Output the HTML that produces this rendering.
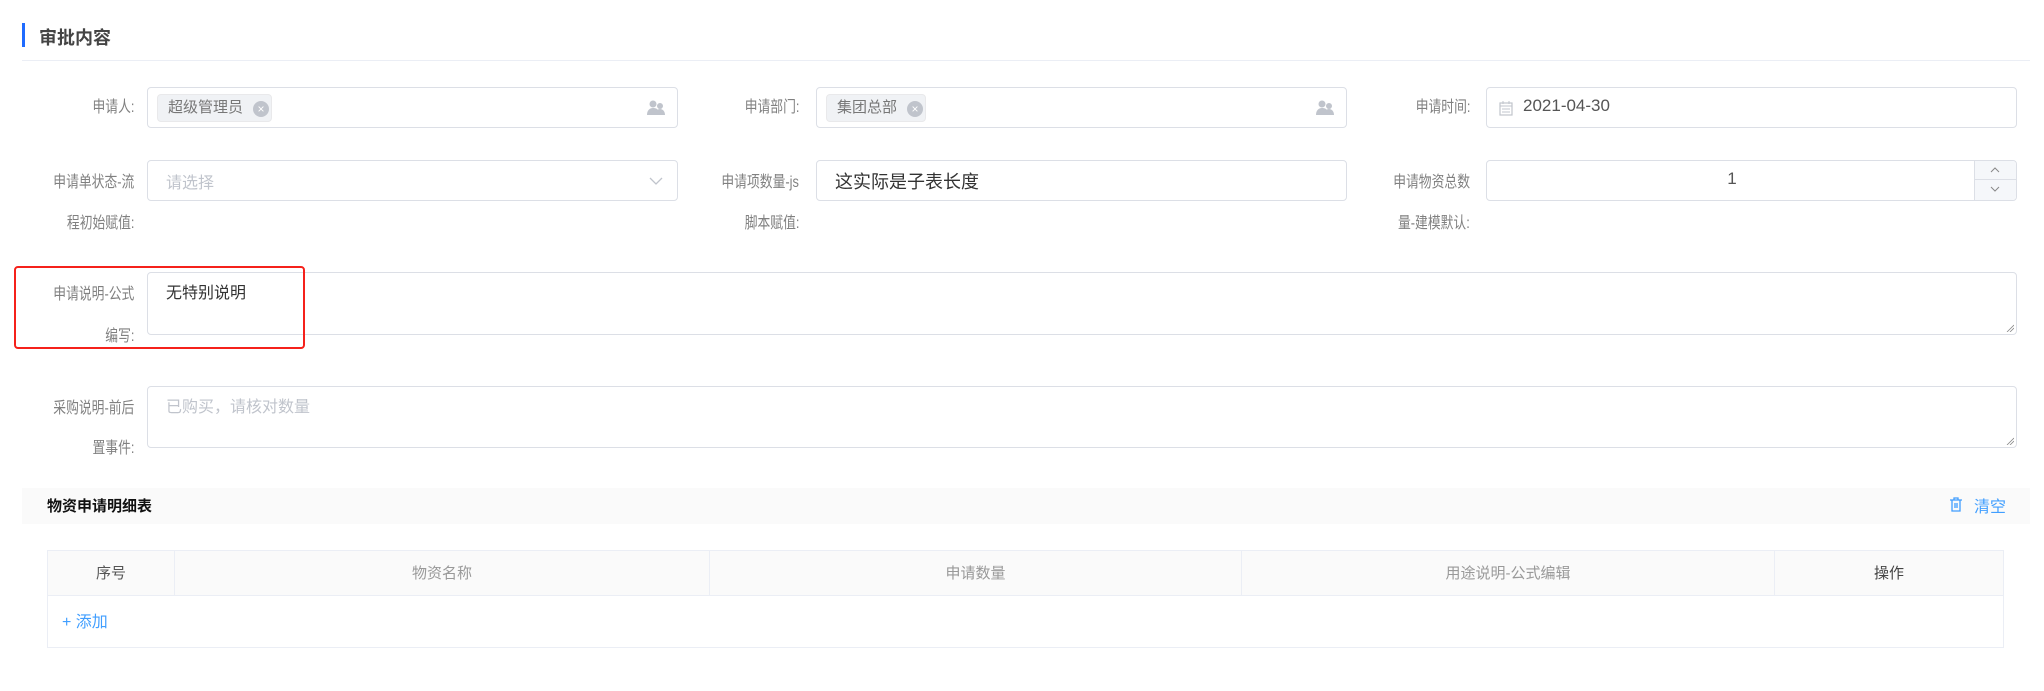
<!DOCTYPE html>
<html><head><meta charset="utf-8">
<style>
*{box-sizing:border-box;margin:0;padding:0}
body{width:2044px;height:691px;background:#fff;position:relative;overflow:hidden;font-family:"Liberation Sans","Noto Sans CJK SC",sans-serif;color:#606266}
.a{position:absolute}
.lbl{position:absolute;font-size:16px;color:#808080;text-align:right;white-space:nowrap;transform:scaleX(0.8);transform-origin:right center}
.inp{position:absolute;border:1px solid #dcdfe6;border-radius:4px;background:#fff}
.tag{position:absolute;top:6px;left:9px;height:28px;background:#f0f2f5;border:1px solid #e9e9eb;border-radius:4px;font-size:15px;color:#777;line-height:26px;padding-left:10px}
.tag i{position:absolute;top:6px;width:16px;height:16px;border-radius:50%;background:#c0c4cc;color:#fff;font-style:normal;font-size:12px;line-height:16px;text-align:center}
</style></head><body>
<div class="a" style="left:22px;top:23px;width:3px;height:24px;background:#1f6bff"></div>
<div class="a" style="left:39px;top:24px;font-size:18px;font-weight:bold;color:#444">审批内容</div>
<div class="a" style="left:22px;top:60px;width:2008px;height:1px;background:#ebeef5"></div>

<div class="lbl" style="right:1910px;top:93px">申请人:</div>
<div class="inp" style="left:147px;top:87px;width:531px;height:41px">
 <div class="tag" style="width:115px">超级管理员<i style="left:95px">×</i></div>
 <svg class="a" style="right:12px;top:12px" width="18" height="16" viewBox="0 0 18 16"><circle cx="6" cy="4" r="3.5" fill="#c0c4cc"/><path d="M0 15c0-5 3-7 6-7s5 1 5 3v4z" fill="#c0c4cc"/><circle cx="13" cy="6" r="3" fill="#c0c4cc"/><path d="M8 15c0-4 2.5-6 5-6s5 2 5 6z" fill="#c0c4cc"/></svg>
</div>
<div class="lbl" style="right:1245px;top:93px">申请部门:</div>
<div class="inp" style="left:816px;top:87px;width:531px;height:41px">
 <div class="tag" style="width:100px">集团总部<i style="left:80px">×</i></div>
 <svg class="a" style="right:12px;top:12px" width="18" height="16" viewBox="0 0 18 16"><circle cx="6" cy="4" r="3.5" fill="#c0c4cc"/><path d="M0 15c0-5 3-7 6-7s5 1 5 3v4z" fill="#c0c4cc"/><circle cx="13" cy="6" r="3" fill="#c0c4cc"/><path d="M8 15c0-4 2.5-6 5-6s5 2 5 6z" fill="#c0c4cc"/></svg>
</div>
<div class="lbl" style="right:574px;top:93px">申请时间:</div>
<div class="inp" style="left:1486px;top:87px;width:531px;height:41px">
 <svg class="a" style="left:12px;top:13px" width="14" height="15" viewBox="0 0 14 15"><rect x="1" y="2" width="12" height="12" fill="none" stroke="#c0c4cc" stroke-width="1.2"/><path d="M1 5h12M4 0v3M10 0v3M3 8h8M3 11h8" stroke="#c0c4cc" stroke-width="1"/></svg>
 <div class="a" style="left:36px;top:8px;font-size:17px;color:#555">2021-04-30</div>
</div>

<div class="lbl" style="right:1910px;top:168px">申请单状态-流</div>
<div class="lbl" style="right:1910px;top:209px">程初始赋值:</div>
<div class="inp" style="left:147px;top:160px;width:531px;height:41px">
 <div class="a" style="left:18px;top:8px;font-size:16px;color:#c0c4cc">请选择</div>
 <svg class="a" style="right:14px;top:15px" width="14" height="10" viewBox="0 0 14 10"><path d="M1 2l6 6 6-6" fill="none" stroke="#c0c4cc" stroke-width="1.3"/></svg>
</div>
<div class="lbl" style="right:1245px;top:168px">申请项数量-js</div>
<div class="lbl" style="right:1245px;top:209px">脚本赋值:</div>
<div class="inp" style="left:816px;top:160px;width:531px;height:41px">
 <div class="a" style="left:18px;top:7px;font-size:18px;color:#333">这实际是子表长度</div>
</div>
<div class="lbl" style="right:574px;top:168px">申请物资总数</div>
<div class="lbl" style="right:574px;top:209px">量-建模默认:</div>
<div class="inp" style="left:1486px;top:160px;width:531px;height:41px">
 <div class="a" style="left:0;width:490px;top:8px;text-align:center;font-size:17px;color:#555">1</div>
 <div class="a" style="right:0;top:0;width:42px;height:39px;background:#f5f7fa;border-left:1px solid #dcdfe6;border-radius:0 4px 4px 0">
  <div style="height:19px;border-bottom:1px solid #dcdfe6"></div>
  <svg class="a" style="left:15px;top:5px" width="10" height="7" viewBox="0 0 10 7"><path d="M1 6l4-4 4 4" fill="none" stroke="#888" stroke-width="1"/></svg>
  <svg class="a" style="left:15px;top:25px" width="10" height="7" viewBox="0 0 10 7"><path d="M1 1l4 4 4-4" fill="none" stroke="#888" stroke-width="1"/></svg>
 </div>
</div>

<div class="lbl" style="right:1910px;top:280px">申请说明-公式</div>
<div class="lbl" style="right:1910px;top:322px">编写:</div>
<div class="inp" style="left:147px;top:272px;width:1870px;height:63px">
 <div class="a" style="left:18px;top:6px;font-size:16px;color:#333">无特别说明</div>
 <svg class="a" style="right:2px;bottom:2px" width="8" height="8" viewBox="0 0 8 8"><path d="M1 8L8 1M4 8L8 4" stroke="#888" stroke-width="0.8"/></svg>
</div>
<div class="a" style="left:14px;top:266px;width:291px;height:83px;border:2.5px solid #f5211b;border-radius:4px"></div>

<div class="lbl" style="right:1910px;top:394px">采购说明-前后</div>
<div class="lbl" style="right:1910px;top:434px">置事件:</div>
<div class="inp" style="left:147px;top:386px;width:1870px;height:62px">
 <div class="a" style="left:18px;top:6px;font-size:16px;color:#c0c4cc">已购买，请核对数量</div>
 <svg class="a" style="right:2px;bottom:2px" width="8" height="8" viewBox="0 0 8 8"><path d="M1 8L8 1M4 8L8 4" stroke="#888" stroke-width="0.8"/></svg>
</div>

<div class="a" style="left:22px;top:488px;width:2008px;height:36px;background:#fafafa"></div>
<div class="a" style="left:47px;top:495px;font-size:15px;font-weight:bold;color:#111">物资申请明细表</div>
<svg class="a" style="left:1949px;top:497px" width="14" height="15" viewBox="0 0 14 15"><path d="M1 3h12M5 3V1h4v2M3 3v11h8V3M6 6v5M8 6v5" fill="none" stroke="#409eff" stroke-width="1.3"/></svg>
<div class="a" style="left:1974px;top:493px;font-size:16px;color:#409eff">清空</div>

<div class="a" style="left:47px;top:550px;width:1957px;height:98px;border:1px solid #ebeef5">
 <div class="a" style="left:0;top:0;width:1955px;height:45px;background:#fafafa;border-bottom:1px solid #ebeef5"></div>
 <div class="a" style="left:126px;top:0;width:1px;height:45px;background:#ebeef5"></div>
 <div class="a" style="left:661px;top:0;width:1px;height:45px;background:#ebeef5"></div>
 <div class="a" style="left:1193px;top:0;width:1px;height:45px;background:#ebeef5"></div>
 <div class="a" style="left:1726px;top:0;width:1px;height:45px;background:#ebeef5"></div>
 <div class="a" style="left:0;width:126px;top:11px;text-align:center;font-size:15px;color:#555">序号</div>
 <div class="a" style="left:127px;width:534px;top:11px;text-align:center;font-size:15px;color:#999">物资名称</div>
 <div class="a" style="left:662px;width:531px;top:11px;text-align:center;font-size:15px;color:#999">申请数量</div>
 <div class="a" style="left:1194px;width:532px;top:11px;text-align:center;font-size:15px;color:#999">用途说明-公式编辑</div>
 <div class="a" style="left:1727px;width:228px;top:11px;text-align:center;font-size:15px;color:#444">操作</div>
 <div class="a" style="left:14px;top:57px;font-size:16px;color:#409eff">+ 添加</div>
</div>
</body></html>
